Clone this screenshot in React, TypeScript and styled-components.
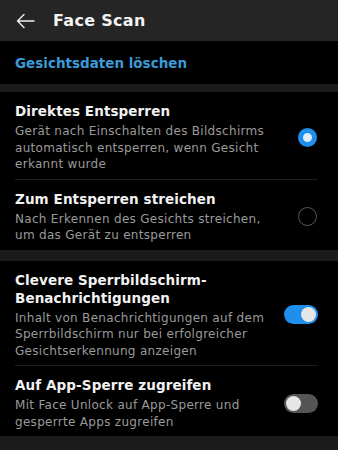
import React, { useState } from "react";
import styled, { createGlobalStyle } from "styled-components";

const Global = createGlobalStyle`
  html, body { margin: 0; padding: 0; background: #000; }
  body { font-family: "DejaVu Sans", "Liberation Sans", sans-serif; -webkit-font-smoothing: antialiased; }
  * { box-sizing: border-box; }
`;

const Screen = styled.div`
  width: 338px;
  height: 450px;
  background: #1b1b1b;
  overflow: hidden;
  display: flex;
  flex-direction: column;
`;

const Header = styled.header`
  height: 41px;
  background: #252525;
  display: flex;
  align-items: center;
  padding-left: 16px;
  gap: 18px;
`;

const BackButton = styled.button`
  background: none;
  border: none;
  padding: 0;
  width: 19px;
  height: 19px;
  display: flex;
  align-items: center;
  justify-content: center;
  color: #f0f0f0;
`;

const Title = styled.h1`
  margin: 0;
  font-size: 16px;
  font-weight: bold;
  color: #f2f2f2;
  letter-spacing: 0.3px;
`;

const LinkBand = styled.div`
  height: 43px;
  background: #000;
  display: flex;
  align-items: center;
  padding-left: 15px;
`;

const LinkText = styled.span`
  color: #3a9bd8;
  font-size: 13.5px;
  font-weight: bold;
`;

const Section = styled.section<{ $gap: number }>`
  margin-top: ${(p) => p.$gap}px;
  background: #000;
  padding: 0 20px 0 15px;
`;

const Item = styled.div<{ $divider?: boolean }>`
  display: flex;
  align-items: center;
  justify-content: space-between;
  padding: 10px 0 6px;
  border-top: ${(p) => (p.$divider ? "1px solid #1f1f1f" : "none")};
`;

const TextCol = styled.div`
  flex: 0 1 265px;
  min-width: 0;
`;

const ItemTitle = styled.div`
  color: #f2f2f2;
  font-size: 13.5px;
  line-height: 18px;
  font-weight: 600;
  letter-spacing: 0.1px;
`;

const ItemDesc = styled.div`
  margin-top: 3px;
  color: #9a9a9a;
  font-size: 12px;
  line-height: 16.5px;
  letter-spacing: 0.3px;
`;

const Radio = styled.div<{ $on: boolean }>`
  flex: none;
  width: 19px;
  height: 19px;
  border-radius: 50%;
  margin-right: 1px;
  ${(p) =>
    p.$on
      ? `background: #dfeefa; border: 5px solid #1e8fec;`
      : `background: transparent; border: 1px solid #5a5a5a;`}
`;

const Track = styled.div<{ $on: boolean }>`
  flex: none;
  width: 34px;
  height: 19px;
  border-radius: 10px;
  background: ${(p) => (p.$on ? "#1e8fec" : "#555")};
  display: flex;
  align-items: center;
  justify-content: ${(p) => (p.$on ? "flex-end" : "flex-start")};
  padding: 0 2px;
`;

const Knob = styled.div`
  width: 15px;
  height: 15px;
  border-radius: 50%;
  background: #e6e6e6;
`;

const Toggle = ({ on }: { on: boolean }) => (
  <Track $on={on}>
    <Knob />
  </Track>
);

export default function App() {
  const [mode] = useState<"direct" | "swipe">("direct");
  return (
    <Screen>
      <Global />
      <Header>
        <BackButton aria-label="Zurück">
          <svg width="19" height="16" viewBox="0 0 19 16" fill="none" stroke="currentColor" strokeWidth="1.4" strokeLinecap="round" strokeLinejoin="round">
            <path d="M18 8H1.5M8 1.5L1.5 8L8 14.5" />
          </svg>
        </BackButton>
        <Title>Face Scan</Title>
      </Header>
      <LinkBand>
        <LinkText>Gesichtsdaten löschen</LinkText>
      </LinkBand>
      <Section $gap={8}>
        <Item>
          <TextCol>
            <ItemTitle>Direktes Entsperren</ItemTitle>
            <ItemDesc>
              Gerät nach Einschalten des Bildschirms automatisch entsperren, wenn Gesicht erkannt wurde
            </ItemDesc>
          </TextCol>
          <Radio $on={mode === "direct"} />
        </Item>
        <Item $divider>
          <TextCol>
            <ItemTitle>Zum Entsperren streichen</ItemTitle>
            <ItemDesc>Nach Erkennen des Gesichts streichen, um das Gerät zu entsperren</ItemDesc>
          </TextCol>
          <Radio $on={mode === "swipe"} />
        </Item>
      </Section>
      <Section $gap={11}>
        <Item>
          <TextCol>
            <ItemTitle>Clevere Sperrbildschirm-Benachrichtigungen</ItemTitle>
            <ItemDesc>
              Inhalt von Benachrichtigungen auf dem Sperrbildschirm nur bei erfolgreicher Gesichtserkennung anzeigen
            </ItemDesc>
          </TextCol>
          <Toggle on />
        </Item>
        <Item $divider>
          <TextCol>
            <ItemTitle>Auf App-Sperre zugreifen</ItemTitle>
            <ItemDesc>Mit Face Unlock auf App-Sperre und gesperrte Apps zugreifen</ItemDesc>
          </TextCol>
          <Toggle on={false} />
        </Item>
      </Section>
    </Screen>
  );
}
